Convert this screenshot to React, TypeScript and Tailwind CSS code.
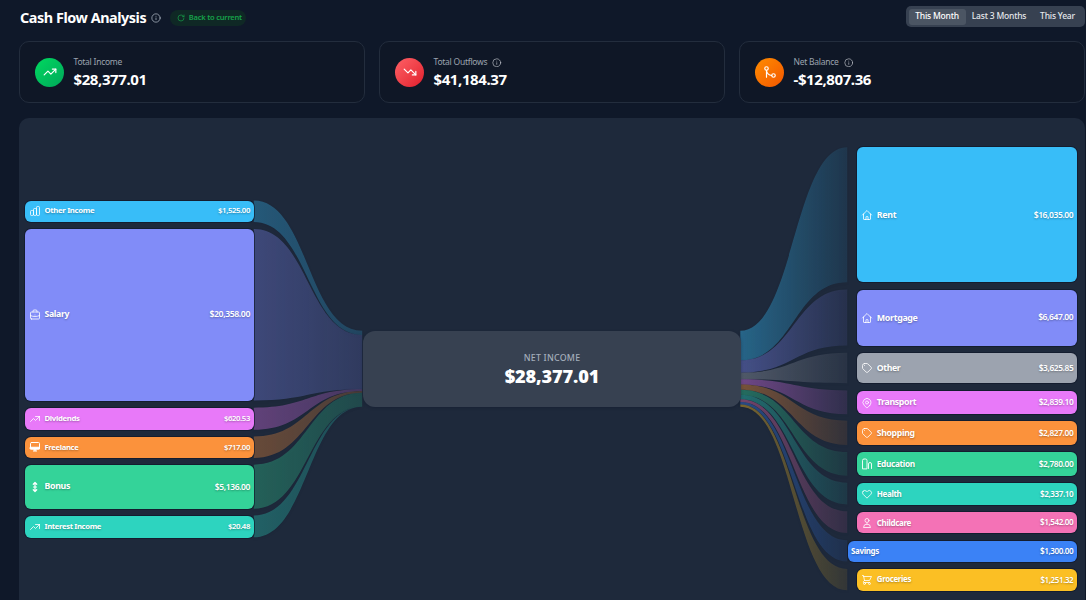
import React from "react";
import { TrendingUp, TrendingDown, GitMerge, Info, RotateCw } from "lucide-react";
import {
  HiOutlineChartBar, HiOutlineBriefcase, HiOutlineTrendingUp, HiOutlineHome, HiOutlineTag,
  HiOutlineLocationMarker, HiOutlineHeart, HiOutlineUser, HiOutlineShoppingCart,
} from "react-icons/hi";

function BonusIcon({ size }: { size: number }) {
  return (
    <svg width={size} height={size} viewBox="0 0 24 24" fill="none" stroke="currentColor" strokeWidth="2.4" strokeLinecap="round" strokeLinejoin="round">
      <path d="M12 3v18M8.500 6.500 12 3l3.500 3.500M8.500 17.500 12 21l3.500-3.500M9 12h6" />
    </svg>
  );
}

function FreelanceIcon({ size }: { size: number }) {
  return (
    <svg width={size} height={size} viewBox="0 0 24 24" fill="none" stroke="currentColor" strokeWidth="2" strokeLinecap="round" strokeLinejoin="round">
      <rect x="3" y="3" width="18" height="13" rx="2" />
      <path d="M3 12.500h18v3.500H3z" fill="currentColor" />
      <path d="M9 20h1.500M13.500 20H15M10.500 16v4M13.500 16v4" />
    </svg>
  );
}

function EducationIcon({ size }: { size: number }) {
  return (
    <svg width={size} height={size} viewBox="0 0 24 24" fill="none" stroke="currentColor" strokeWidth="1.8" strokeLinecap="round" strokeLinejoin="round">
      <path d="M3 21V5a3 3 0 0 1 3-3h3a3 3 0 0 1 3 3v16z" />
      <path d="M15 21V12a3 3 0 0 1 6 0v9" />
    </svg>
  );
}

type N = { label: string; value: string; top: number; bottom: number; color: string; Icon?: any; from: number; to: number; ls: number; vs: number };

const PX = 19, PY = 118;

const left: N[] = [
  { label: "Other Income", value: "$1,525.00", top: 200.7, bottom: 222, color: "#38bdf8", Icon: HiOutlineChartBar, from: 331, to: 335.1, ls: 7.1, vs: 7 },
  { label: "Salary", value: "$20,358.00", top: 229.2, bottom: 400.8, color: "#818cf8", Icon: HiOutlineBriefcase, from: 335.1, to: 389.6, ls: 8, vs: 7.9 },
  { label: "Dividends", value: "$620.53", top: 408, bottom: 430, color: "#e879f9", Icon: HiOutlineTrendingUp, from: 389.6, to: 391.2, ls: 7.1, vs: 7 },
  { label: "Freelance", value: "$717.00", top: 436.7, bottom: 458.3, color: "#fb923c", Icon: FreelanceIcon, from: 391.2, to: 393.1, ls: 7, vs: 7 },
  { label: "Bonus", value: "$5,136.00", top: 465, bottom: 509, color: "#34d399", Icon: BonusIcon, from: 393.1, to: 406.9, ls: 8.1, vs: 7.7 },
  { label: "Interest Income", value: "$20.48", top: 515.8, bottom: 537.7, color: "#2dd4bf", Icon: HiOutlineTrendingUp, from: 406.9, to: 407, ls: 7, vs: 7 },
];

const right: N[] = [
  { label: "Rent", value: "$16,035.00", top: 147.4, bottom: 282.4, color: "#38bdf8", Icon: HiOutlineHome, from: 331, to: 360.6, ls: 8.2, vs: 7.7 },
  { label: "Mortgage", value: "$6,647.00", top: 289.7, bottom: 345.7, color: "#818cf8", Icon: HiOutlineHome, from: 360.6, to: 372.9, ls: 8.2, vs: 7.7 },
  { label: "Other", value: "$3,625.85", top: 353, bottom: 383.4, color: "#9ca3af", Icon: HiOutlineTag, from: 372.9, to: 379.6, ls: 8, vs: 7.6 },
  { label: "Transport", value: "$2,839.10", top: 390.7, bottom: 414.5, color: "#e879f9", Icon: HiOutlineLocationMarker, from: 379.6, to: 384.8, ls: 8.1, vs: 7.6 },
  { label: "Shopping", value: "$2,827.00", top: 421, bottom: 445.3, color: "#fb923c", Icon: HiOutlineTag, from: 384.8, to: 390, ls: 8, vs: 7.6 },
  { label: "Education", value: "$2,780.00", top: 452.3, bottom: 476, color: "#34d399", Icon: EducationIcon, from: 390, to: 395.1, ls: 7.6, vs: 7.6 },
  { label: "Health", value: "$2,337.10", top: 483, bottom: 504.8, color: "#2dd4bf", Icon: HiOutlineHeart, from: 395.1, to: 399.4, ls: 7.3, vs: 7.3 },
  { label: "Childcare", value: "$1,542.00", top: 511.7, bottom: 533.4, color: "#f472b6", Icon: HiOutlineUser, from: 399.4, to: 402.3, ls: 7.3, vs: 7.3 },
  { label: "Savings", value: "$1,300.00", top: 540.7, bottom: 562, color: "#3b82f6", from: 402.3, to: 404.7, ls: 7.3, vs: 7.3 },
  { label: "Groceries", value: "$1,251.32", top: 569.3, bottom: 590.8, color: "#fbbf24", Icon: HiOutlineShoppingCart, from: 404.7, to: 407, ls: 7.2, vs: 7.2 },
];

const LX0 = 254, LX1 = 362.5, RX0 = 741, RX1 = 848;

function band(x0: number, x1: number, a0: number, a1: number, b0: number, b1: number) {
  const m = (x0 + x1) / 2;
  return `M${x0} ${a0}C${m} ${a0} ${m} ${b0} ${x1} ${b0}L${x1} ${b1}C${m} ${b1} ${m} ${a1} ${x0} ${a1}Z`;
}

function Flows() {
  return (
    <svg className="absolute inset-0 w-full h-full" viewBox={`${PX} ${PY} 1067 482`} preserveAspectRatio="xMinYMin meet">
      <defs>
        {left.map((n, i) => (
          <linearGradient key={i} id={`l${i}`} x1={LX0} x2={LX1} y1="0" y2="0" gradientUnits="userSpaceOnUse">
            <stop offset="0" stopColor={n.color} stopOpacity={0.34} />
            <stop offset="1" stopColor={n.color} stopOpacity={0.2} />
          </linearGradient>
        ))}
        {right.map((n, i) => (
          <linearGradient key={i} id={`r${i}`} x1={RX0} x2={RX1} y1="0" y2="0" gradientUnits="userSpaceOnUse">
            <stop offset="0" stopColor={n.color} stopOpacity={0.42} />
            <stop offset="1" stopColor={n.color} stopOpacity={0.1} />
          </linearGradient>
        ))}
      </defs>
      {left.map((n, i) => (
        <path key={i} d={band(LX0, LX1, n.top, n.bottom, n.from, n.to)} fill={`url(#l${i})`} className="[filter:drop-shadow(0_1px_1px_rgba(15,23,42,0.5))]" />
      ))}
      {right.map((n, i) => (
        <path key={i} d={band(RX0, RX1, n.from, n.to, n.top, n.bottom)} fill={`url(#r${i})`} className="[filter:drop-shadow(0_1px_1px_rgba(15,23,42,0.5))]" />
      ))}
    </svg>
  );
}

function SankeyNode({ n, x, w }: { n: N; x: number; w: number }) {
  const h = n.bottom - n.top;
  const Icon = n.Icon;
  return (
    <div
      className="absolute flex items-center rounded-[6px] pr-1 font-bold shadow-[0_0_0_1px_rgba(15,23,42,0.65)] text-white [text-shadow:0_1px_2px_rgba(0,0,0,0.3)]"
      style={{ left: x - PX, top: n.top - PY, width: w, height: h, backgroundColor: n.color }}
    >
      {Icon ? (
        <span className="flex w-[19.500px] shrink-0 justify-center">
          <Icon size={12} strokeWidth={1.6} />
        </span>
      ) : (
        <span className="w-[3px] shrink-0" />
      )}
      <span className="whitespace-nowrap" style={{ fontSize: n.ls + 0.7, letterSpacing: "-0.35px" }}>{n.label}</span>
      <span className="ml-auto whitespace-nowrap font-semibold" style={{ fontSize: n.vs + 0.8, letterSpacing: "-0.4px" }}>{n.value}</span>
    </div>
  );
}

function StatCard({ label, value, info, iconClass, icon }: { label: string; value: string; info?: boolean; iconClass: string; icon: React.ReactNode }) {
  return (
    <div className="flex h-[62px] items-center gap-[9.500px] rounded-[10px] border border-[#232d3d] bg-[#0f1726] pl-[15px]">
      <div className={`flex h-[29px] w-[29px] items-center justify-center rounded-full text-white ${iconClass}`}>{icon}</div>
      <div className="flex flex-col pt-[1px]">
        <div className="flex h-[12px] items-center gap-[5px] text-[8.500px] tracking-[-0.25px] text-[#9ca3af]">
          {label}
          {info && <Info size={9.500} strokeWidth={1.5} className="text-[#d1d5db]" />}
        </div>
        <div className="text-[15px] font-bold leading-[20px] tracking-[-0.4px] text-white">{value}</div>
      </div>
    </div>
  );
}

export default function App() {
  return (
    <div className="h-screen overflow-hidden bg-[#0f1829] pl-[19px] pr-px font-['Noto_Sans','Open_Sans',sans-serif]">
      <header className="flex h-[41px] items-start justify-between pt-[6px]">
        <div className="flex h-[22px] items-center pt-[1px]">
          <h1 className="ml-px text-[14.400px] font-bold tracking-[-0.45px] text-white">Cash Flow Analysis</h1>
          <Info size={10} strokeWidth={1.5} className="ml-[4.500px] text-[#cbd5e1]" />
          <div className="ml-[9.500px] flex h-[16px] w-[76px] items-center gap-[3.500px] rounded-full bg-[#0f2825] pl-[7px] text-[7.500px] font-semibold tracking-[-0.2px] text-[#16a34a]">
            <RotateCw size={8} strokeWidth={2} />
            Back to current
          </div>
        </div>
        <div className="flex h-[21px] items-center rounded-[5px] bg-[#374151] px-[2.500px] text-[8.500px] font-medium tracking-[-0.2px] text-[#e5e7eb]">
          <div className="flex h-[16px] w-[57px] items-center justify-center rounded-[3px] bg-[#4b5563] text-white">This Month</div>
          <div className="w-[67px] text-center">Last 3 Months</div>
          <div className="w-[50px] text-center">This Year</div>
        </div>
      </header>

      <section className="grid grid-cols-3 gap-[14px]">
        <StatCard label="Total Income" value="$28,377.01" iconClass="bg-gradient-to-br from-[#00d95f] to-[#00a85a]" icon={<TrendingUp size={14} strokeWidth={2} />} />
        <StatCard label="Total Outflows" value="$41,184.37" info iconClass="bg-gradient-to-br from-[#ff5f66] to-[#e0162b]" icon={<TrendingDown size={14} strokeWidth={2} />} />
        <StatCard label="Net Balance" value="-$12,807.36" info iconClass="bg-gradient-to-br from-[#ff8c00] to-[#f25500]" icon={<GitMerge size={14} strokeWidth={2} />} />
      </section>

      <main className="relative mt-[15px] h-[600px] rounded-t-[10px] bg-[#1e293b]">
        <Flows />
        {left.map((n) => (
          <SankeyNode key={n.label} n={n} x={25} w={229} />
        ))}
        {right.map((n) => (
          <SankeyNode key={n.label} n={n} x={n.Icon ? 857.3 : 848} w={n.Icon ? 220 : 229.3} />
        ))}
        <div
          className="absolute flex flex-col items-center justify-center rounded-[12px] bg-[#374151] pt-[2px] shadow-[0_1px_3px_rgba(15,23,42,0.4)]"
          style={{ left: 363 - PX, top: 331 - PY, width: 378, height: 76 }}
        >
          <div className="text-[8.800px] font-medium leading-[12px] tracking-[0.25px] text-[#a3adba]">NET INCOME</div>
          <div className="text-[18.200px] font-black leading-[24px] tracking-[-0.15px] text-white">$28,377.01</div>
        </div>
      </main>
    </div>
  );
}
